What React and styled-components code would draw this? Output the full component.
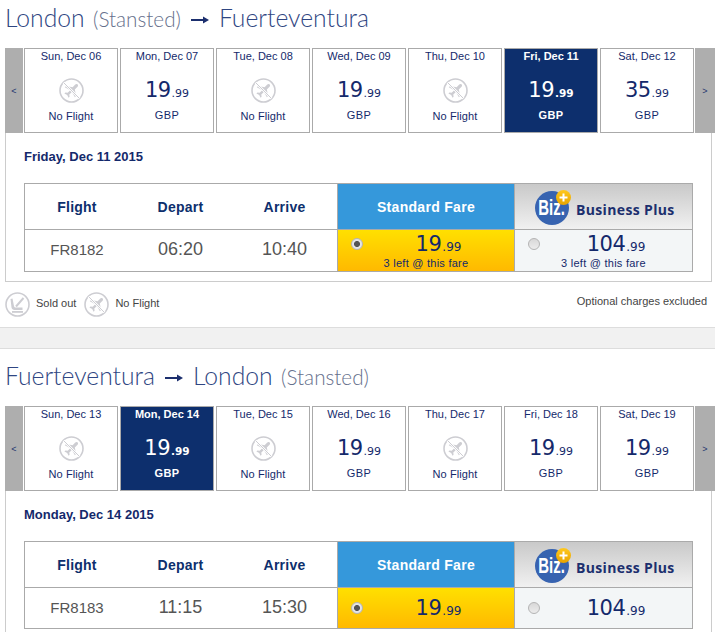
import React from "react";
import styled, { createGlobalStyle } from "styled-components";

const Global = createGlobalStyle`
  html, body { margin: 0; padding: 0; background: #fff; }
  body { font-family: "Liberation Sans", Arial, sans-serif; color: #14296b; }
  #root { height: 632px; overflow: hidden; }
`;

const Section = styled.section`
  padding-top: ${(p) => (p.$first ? 0 : 9)}px;
`;
const Title = styled.h1`
  margin: 0;
  height: 48px;
  padding: 3px 0 0 5px;
  box-sizing: border-box;
  display: flex;
  align-items: baseline;
  font: 300 24.7px/30px Lato, sans-serif;
  color: #2f4682;
`;
const Sub = styled.span`
  font-size: 20.7px;
  color: #66708c;
  margin-left: 8.5px;
`;
const ArrowIcon = styled.svg`
  width: 18px;
  height: 10px;
  margin: 12px 10px 0;
  align-self: flex-start;
  flex: none;
`;
const Calendar = styled.div`
  display: flex;
  margin-left: 5px;
  height: 85px;
`;
const Nav = styled.div`
  width: ${(p) => p.$w}px;
  margin-left: ${(p) => p.$ml}px;
  flex: none;
  background: #aeaeae;
  color: #24366f;
  font: 9px "Liberation Sans", sans-serif;
  display: flex;
  align-items: center;
  justify-content: center;
`;
const Days = styled.div`
  display: flex;
  gap: 2px;
  margin-left: 1px;
`;
const Day = styled.div`
  width: 94px;
  box-sizing: border-box;
  border: 1px solid #aaa;
  background: ${(p) => (p.$on ? "#0d2f6d" : "#fff")};
  color: ${(p) => (p.$on ? "#fff" : "#14296b")};
  display: flex;
  flex-direction: column;
  align-items: center;
`;
const DayName = styled.div`
  font-size: 11px;
  line-height: 14px;
  font-weight: ${(p) => (p.$on ? 700 : 400)};
`;
const DayPrice = styled.div`
  margin-top: 14px;
  height: 27px;
  display: flex;
  align-items: baseline;
`;
const Whole = styled.span`
  font: 21px/27px "DejaVu Sans", Verdana, sans-serif;
  letter-spacing: -0.5px;
`;
const Cents = styled.span`
  font: ${(p) => p.$size}px/27px "DejaVu Sans", Verdana, sans-serif;
  font-weight: ${(p) => (p.$on ? 700 : 400)};
  margin-left: 1px;
`;
const Currency = styled.div`
  font-size: 11px;
  line-height: 14px;
  margin-top: 4px;
  font-weight: ${(p) => (p.$on ? 700 : 400)};
  letter-spacing: 0.4px;
`;
const NoIcon = styled.div`
  margin-top: 15px;
  height: 25px;
`;
const NoText = styled.div`
  font-size: 11px;
  line-height: 14px;
  margin-top: 6px;
  letter-spacing: 0.1px;
`;
const Panel = styled.div`
  margin-left: 5px;
  width: 707px;
  box-sizing: border-box;
  height: ${(p) => p.$h}px;
  border: 1px solid #ccc;
  border-top: 0;
  border-bottom: ${(p) => (p.$open ? 0 : "1px solid #ccc")};
  padding: 17px 18px 0;
`;
const DateHead = styled.h2`
  margin: 0 0 19px;
  height: 14px;
  font: 700 13px/14px "Liberation Sans", sans-serif;
  color: #14296b;
`;
const FareTable = styled.div`
  display: grid;
  grid-template-columns: 104px 103px 105px 177px 178px;
  grid-template-rows: 46px ${(p) => p.$row}px;
  width: 669px;
  box-sizing: border-box;
  border: 1px solid #aaa;
`;
const HeadCell = styled.div`
  font: 700 14px/47px "Liberation Sans", sans-serif;
  letter-spacing: 0.25px;
  text-align: center;
  color: #0d2f6d;
  border-bottom: 1px solid #aaa;
  box-sizing: border-box;
  height: 46px;
`;
const StdHead = styled(HeadCell)`
  background: #3598db;
  color: #fff;
  border-left: 1px solid #aaa;
  letter-spacing: 0.3px;
`;
const BizHead = styled.div`
  background: linear-gradient(#c9c9c9, #f1f1f1);
  border-left: 1px solid #aaa;
  border-bottom: 1px solid #aaa;
  display: flex;
  align-items: center;
  padding-left: 20px;
  box-sizing: border-box;
`;
const BizLogo = styled.div`
  position: relative;
  width: 34px;
  height: 34px;
  margin-top: 2px;
  border-radius: 50%;
  background: #3763b0;
  color: #fff;
  display: flex;
  align-items: center;
  justify-content: center;
  flex: none;
`;
const BizWord = styled.span`
  font: 700 22px/34px "Liberation Sans", sans-serif;
  display: block;
  transform: scaleX(0.68);
  white-space: nowrap;
`;
const BizBadge = styled.svg`
  position: absolute;
  top: -1px;
  right: -2px;
  width: 15px;
  height: 15px;
`;
const BizName = styled.span`
  font: 700 14px/16px "Open Sans", sans-serif;
  letter-spacing: 0.35px;
  color: #1c2f6e;
  margin: 7px 0 0 7px;
  white-space: nowrap;
`;
const Cell = styled.div`
  font: ${(p) => p.$size}px/${(p) => p.$lh}px "Liberation Sans", sans-serif;
  color: #555;
  text-align: center;
`;
const FareCell = styled.div`
  border-left: 1px solid #aaa;
  background: ${(p) => (p.$std ? "linear-gradient(#ffe000, #ffb900)" : "#f3f6f7")};
  color: #14296b;
  display: flex;
  flex-direction: column;
  justify-content: ${(p) => (p.$note ? "flex-start" : "center")};
`;
const FareLine = styled.div`
  display: flex;
  align-items: center;
  height: ${(p) => (p.$note ? 28 : 40)}px;
  padding-left: 13px;
`;
const Radio = styled.span`
  width: 12px;
  height: 12px;
  flex: none;
  box-sizing: border-box;
  border-radius: 50%;
  border: 1px solid #b4b4b4;
  background: ${(p) =>
    p.$on
      ? "radial-gradient(circle, #555 0 2.6px, #e4e4e4 3.4px)"
      : "linear-gradient(#d8d8d8, #ececec)"};
`;
const FarePrice = styled.div`
  flex: 1;
  display: flex;
  justify-content: center;
  align-items: baseline;
  margin-top: 3px;
  color: #14296b;
`;
const Note = styled.div`
  font-size: 11px;
  line-height: 12px;
  margin-top: -1px;
  letter-spacing: 0.25px;
  text-align: center;
`;
const Legend = styled.div`
  display: flex;
  justify-content: space-between;
  height: 45px;
  padding: 10px 8px 0 5px;
  box-sizing: border-box;
  font-size: 11px;
  color: #444;
`;
const LegendItems = styled.div`
  display: flex;
  gap: 8px;
`;
const LegendItem = styled.div`
  display: flex;
  gap: 6px;
  height: 25px;
  line-height: 22px;
`;
const Note2 = styled.div`
  line-height: 18px;
`;
const Strip = styled.div`
  height: 22px;
  box-sizing: border-box;
  background: #f1f1f1;
  border-top: 1px solid #ddd;
  border-bottom: 1px solid #ddd;
`;

const NoFlightIcon = () => (
  <svg width="25" height="25" viewBox="0 0 25 25">
    <circle cx="12.5" cy="12.5" r="11.5" fill="#fff" stroke="#cdcdd2" strokeWidth="1.6" />
    <path
      d="M18.6 6.4c.8.8.5 1.9-.3 2.7l-2.5 2.4 1.4 6.6-1.3 1.2-3-5.4-2.6 2.5.3 2.3-1 1-1.4-2.8-2.8-1.4 1-1 2.3.3 2.5-2.6-5.4-3 1.2-1.3 6.6 1.4 2.4-2.5c.8-.8 1.9-1.1 2.7-.3z"
      fill="#cdcdd2"
    />
    <path d="M4.5 4.5l16 16" stroke="#fff" strokeWidth="2.4" />
    <path d="M4.5 4.5l16 16" stroke="#cdcdd2" strokeWidth="1" />
  </svg>
);

const SoldOutIcon = () => (
  <svg width="25" height="25" viewBox="0 0 25 25">
    <circle cx="12.5" cy="12.5" r="11.5" fill="#fff" stroke="#cdcdd2" strokeWidth="1.6" />
    <path d="M18.5 6l-7.5 8.5" stroke="#cdcdd2" strokeWidth="2" fill="none" />
    <path d="M7.5 6.5l1.5 7.5c.2 1 1 1.5 2 1.5h6.5V18H9.5c-1.6 0-2.7-1-3-2.5L5.5 7z" fill="#cdcdd2" />
    <rect x="7" y="19" width="11" height="1.8" fill="#cdcdd2" />
  </svg>
);

const RouteArrow = () => (
  <ArrowIcon viewBox="0 0 18 10">
    <path d="M0 5h14" stroke="#1c2f6e" strokeWidth="2" />
    <path d="M12 1.5L18 5l-6 3.5z" fill="#1c2f6e" />
  </ArrowIcon>
);

const Price = ({ whole, on, big }) => (
  <>
    <Whole>{whole}</Whole>
    <Cents $size={big ? 12 : on ? 10.5 : 11} $on={on}>.99</Cents>
  </>
);

const DayCard = ({ name, fare, on }) => (
  <Day $on={on}>
    <DayName $on={on}>{name}</DayName>
    {fare ? (
      <>
        <DayPrice>
          <Price whole={fare} on={on} />
        </DayPrice>
        <Currency $on={on}>GBP</Currency>
      </>
    ) : (
      <>
        <NoIcon>
          <NoFlightIcon />
        </NoIcon>
        <NoText>No Flight</NoText>
      </>
    )}
  </Day>
);

const Cal = ({ days }) => (
  <Calendar>
    <Nav $w={18} $ml={0}>&lt;</Nav>
    <Days>
      {days.map((d) => (
        <DayCard key={d.name} {...d} />
      ))}
    </Days>
    <Nav $w={20} $ml={1}>&gt;</Nav>
  </Calendar>
);

const Fare = ({ std, whole, note }) => (
  <FareCell $std={std} $note={note}>
    <FareLine $note={note}>
      <Radio $on={std} />
      <FarePrice>
        <Price whole={whole} big />
      </FarePrice>
    </FareLine>
    {note && <Note>3 left @ this fare</Note>}
  </FareCell>
);

const Table = ({ flight, dep, arr, note, row }) => (
  <FareTable $row={row}>
    <HeadCell>Flight</HeadCell>
    <HeadCell>Depart</HeadCell>
    <HeadCell>Arrive</HeadCell>
    <StdHead>Standard Fare</StdHead>
    <BizHead>
      <BizLogo>
        <BizWord>Biz.</BizWord>
        <BizBadge viewBox="0 0 15 15">
          <defs>
            <linearGradient id={`badge-${flight}`} x1="0" y1="0" x2="0" y2="1">
              <stop offset="0" stopColor="#ffc81e" />
              <stop offset="1" stopColor="#e8a400" />
            </linearGradient>
          </defs>
          <circle cx="7.5" cy="7.5" r="7.5" fill={`url(#badge-${flight})`} />
          <path d="M7.5 3.5v8M3.5 7.5h8" stroke="#fff" strokeWidth="2" />
        </BizBadge>
      </BizLogo>
      <BizName>Business Plus</BizName>
    </BizHead>
    <Cell $size={15} $lh={row - 1}>{flight}</Cell>
    <Cell $size={18} $lh={row - 2}>{dep}</Cell>
    <Cell $size={18} $lh={row - 2}>{arr}</Cell>
    <Fare std whole="19" note={note} />
    <Fare whole="104" note={note} />
  </FareTable>
);

const out = [
  { name: "Sun, Dec 06" },
  { name: "Mon, Dec 07", fare: "19" },
  { name: "Tue, Dec 08" },
  { name: "Wed, Dec 09", fare: "19" },
  { name: "Thu, Dec 10" },
  { name: "Fri, Dec 11", fare: "19", on: true },
  { name: "Sat, Dec 12", fare: "35" },
];
const back = [
  { name: "Sun, Dec 13" },
  { name: "Mon, Dec 14", fare: "19", on: true },
  { name: "Tue, Dec 15" },
  { name: "Wed, Dec 16", fare: "19" },
  { name: "Thu, Dec 17" },
  { name: "Fri, Dec 18", fare: "19" },
  { name: "Sat, Dec 19", fare: "19" },
];

export default function App() {
  return (
    <>
      <Global />
      <Section $first>
        <Title>
          London<Sub>(Stansted)</Sub>
          <RouteArrow />
          Fuerteventura
        </Title>
        <Cal days={out} />
        <Panel $h={149}>
          <DateHead>Friday, Dec 11 2015</DateHead>
          <Table flight="FR8182" dep="06:20" arr="10:40" note row={41} />
        </Panel>
        <Legend>
          <LegendItems>
            <LegendItem>
              <SoldOutIcon />
              Sold out
            </LegendItem>
            <LegendItem>
              <NoFlightIcon />
              No Flight
            </LegendItem>
          </LegendItems>
          <Note2>Optional charges excluded</Note2>
        </Legend>
        <Strip />
      </Section>
      <Section>
        <Title>
          Fuerteventura
          <RouteArrow />
          London<Sub>(Stansted)</Sub>
        </Title>
        <Cal days={back} />
        <Panel $h={149} $open>
          <DateHead>Monday, Dec 14 2015</DateHead>
          <Table flight="FR8183" dep="11:15" arr="15:30" row={40} />
        </Panel>
      </Section>
    </>
  );
}
